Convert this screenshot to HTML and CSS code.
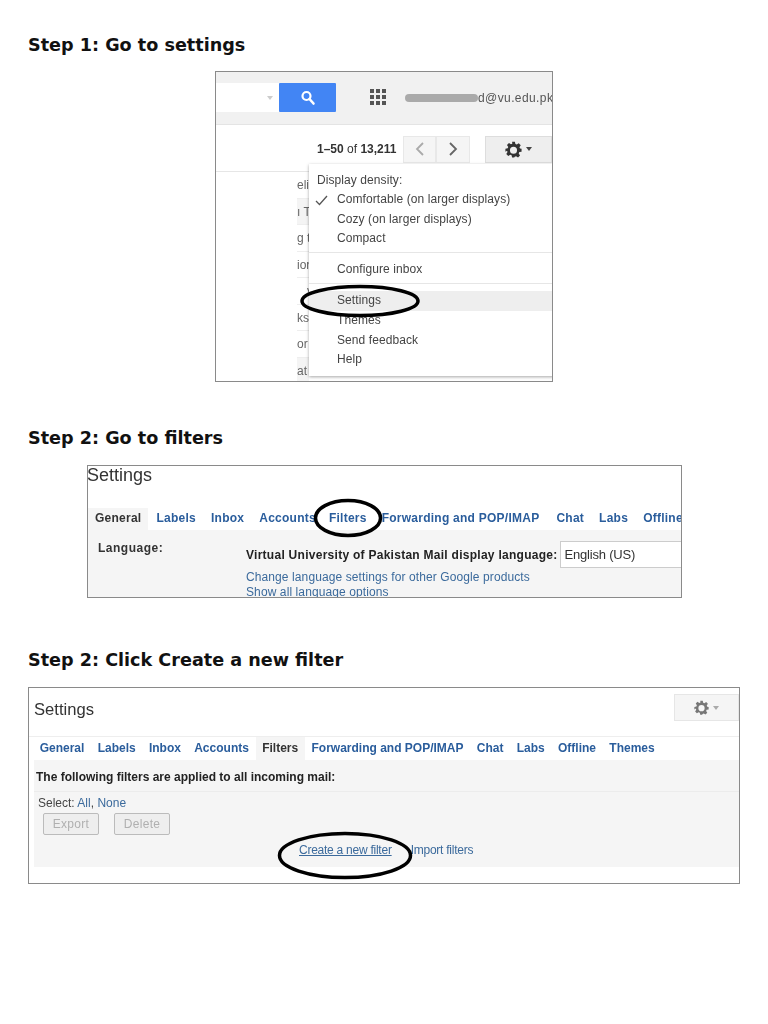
FILE: index.html
```html
<!DOCTYPE html>
<html lang="en">
<head>
    <meta charset="UTF-8">
    <meta name="viewport" content="width=device-width, initial-scale=1.0">
    <title>Create a new filter</title>
    <link rel="stylesheet" href="styles.css">
</head>
<body>
    <div class="page">
        <h2 class="step step-one">Step 1: Go to settings</h2>

        <!-- gmail inbox with gear menu -->
        <div class="shot shot-inbox">
            <div class="top-bar">
                <div class="search-input"><span class="search-caret"></span></div>
                <div class="search-btn">
                    <svg width="16" height="16" viewBox="0 0 16 16"><circle cx="6.5" cy="6" r="4" fill="none" stroke="#fff" stroke-width="2.2"/><path d="M9.5 9l4 4.5" stroke="#fff" stroke-width="2.6" stroke-linecap="round"/></svg>
                </div>
                <svg class="apps-icon" width="16" height="17" viewBox="0 0 16 17" fill="#555">
                    <rect x="0" y="0" width="4" height="4"/><rect x="6" y="0" width="4" height="4"/><rect x="12" y="0" width="4" height="4"/>
                    <rect x="0" y="6" width="4" height="4"/><rect x="6" y="6" width="4" height="4"/><rect x="12" y="6" width="4" height="4"/>
                    <rect x="0" y="12" width="4" height="4"/><rect x="6" y="12" width="4" height="4"/><rect x="12" y="12" width="4" height="4"/>
                </svg>
                <div class="account"><span class="account-smudge"></span><span class="account-text">d@vu.edu.pk</span></div>
            </div>
            <div class="tool-bar">
                <span class="page-count"><b>1–50</b> of <b>13,211</b></span>
                <div class="pager">
                    <span class="pager-btn"><svg width="10" height="14" viewBox="0 0 10 14"><path d="M8 1L2 7l6 6" fill="none" stroke="#aaa" stroke-width="1.8"/></svg></span>
                    <span class="pager-btn"><svg width="10" height="14" viewBox="0 0 10 14"><path d="M2 1l6 6-6 6" fill="none" stroke="#666" stroke-width="1.8"/></svg></span>
                </div>
                <div class="gear-btn">
                    <svg width="17" height="17" viewBox="0 0 24 24"><path fill="#333" fill-rule="evenodd" d="M10 1h4l.7 3.2 1.9.8 2.8-1.8 2.8 2.8-1.8 2.8.8 1.9L23.4 11v4l-3.2.7-.8 1.9 1.8 2.8-2.8 2.8-2.8-1.8-1.9.8L13 23.4h-3l-.7-3.2-1.9-.8-2.8 1.8-2.8-2.8 1.8-2.8-.8-1.9L.6 15v-4l3.2-.7.8-1.9L2.8 5.6l2.8-2.8 2.8 1.8 1.9-.8zM12 8a5 5 0 1 0 0 10 5 5 0 0 0 0-10z"/></svg>
                    <span class="caret"></span>
                </div>
            </div>
            <ul class="mail-rows">
                <li>eli</li>
                <li class="read">ı T</li>
                <li>g t</li>
                <li>ior</li>
                <li>&nbsp;&nbsp;&nbsp;v</li>
                <li>ks</li>
                <li>or</li>
                <li class="read">at</li>
            </ul>
            <div class="gear-menu">
                <div class="menu-head">Display density:</div>
                <div class="menu-item menu-checked">
                    <svg class="check" width="13" height="11" viewBox="0 0 13 11"><path d="M1 6l3.5 3.5L12 1" fill="none" stroke="#555" stroke-width="1.3"/></svg>
                    Comfortable (on larger displays)
                </div>
                <div class="menu-item">Cozy (on larger displays)</div>
                <div class="menu-item">Compact</div>
                <div class="menu-sep"></div>
                <div class="menu-item">Configure inbox</div>
                <div class="menu-sep"></div>
                <div class="menu-item menu-active">Settings</div>
                <div class="menu-item">Themes</div>
                <div class="menu-item">Send feedback</div>
                <div class="menu-item">Help</div>
            </div>
            <svg class="ring ring-settings" viewBox="0 0 120 34"><ellipse cx="60" cy="17" rx="58" ry="14.5" fill="none" stroke="#000" stroke-width="3.5"/></svg>
        </div>

        <h2 class="step step-two">Step 2: Go to filters</h2>

        <!-- settings, general tab -->
        <div class="shot shot-general">
            <div class="settings-title">Settings</div>
            <div class="tabs tabs-general">
                <span class="tab tab-current">General</span>
                <span class="tab">Labels</span>
                <span class="tab">Inbox</span>
                <span class="tab">Accounts</span>
                <span class="tab tab-pull">Filters</span>
                <span class="tab tab-wide">Forwarding and POP/IMAP</span>
                <span class="tab">Chat</span>
                <span class="tab">Labs</span>
                <span class="tab tab-last">Offline</span>
            </div>
            <div class="general-body">
                <div class="lang-label">Language:</div>
                <div class="lang-col">
                    <div class="lang-row">
                        <span class="lang-text">Virtual University of Pakistan Mail display language:</span>
                        <span class="lang-select">English (US)</span>
                    </div>
                    <a class="link lang-link">Change language settings for other Google products</a>
                    <a class="link lang-link">Show all language options</a>
                </div>
            </div>
            <svg class="ring ring-filters" viewBox="0 0 70 40"><ellipse cx="35" cy="20" rx="32.5" ry="17.5" fill="none" stroke="#000" stroke-width="3.5"/></svg>
        </div>

        <h2 class="step step-three">Step 2: Click Create a new filter</h2>

        <!-- settings, filters tab -->
        <div class="shot shot-filters">
            <div class="filters-head">
                <div class="settings-title">Settings</div>
                <div class="gear-small">
                    <svg width="15" height="15" viewBox="0 0 24 24"><path fill="#777" fill-rule="evenodd" d="M10 1h4l.7 3.2 1.9.8 2.8-1.8 2.8 2.8-1.8 2.8.8 1.9L23.4 11v4l-3.2.7-.8 1.9 1.8 2.8-2.8 2.8-2.8-1.8-1.9.8L13 23.4h-3l-.7-3.2-1.9-.8-2.8 1.8-2.8-2.8 1.8-2.8-.8-1.9L.6 15v-4l3.2-.7.8-1.9L2.8 5.6l2.8-2.8 2.8 1.8 1.9-.8zM12 8a5 5 0 1 0 0 10 5 5 0 0 0 0-10z"/></svg>
                    <span class="caret caret-light"></span>
                </div>
            </div>
            <div class="tabs tabs-filters">
                <span class="tab">General</span>
                <span class="tab">Labels</span>
                <span class="tab">Inbox</span>
                <span class="tab">Accounts</span>
                <span class="tab tab-current">Filters</span>
                <span class="tab">Forwarding and POP/IMAP</span>
                <span class="tab">Chat</span>
                <span class="tab">Labs</span>
                <span class="tab">Offline</span>
                <span class="tab">Themes</span>
            </div>
            <div class="filters-body">
                <div class="filters-note">The following filters are applied to all incoming mail:</div>
                <div class="filters-select">Select: <a class="link">All</a>, <a class="link">None</a></div>
                <div class="filters-btns">
                    <span class="btn">Export</span>
                    <span class="btn">Delete</span>
                </div>
                <div class="filters-links">
                    <a class="link create-link">Create a new filter</a>
                    <a class="link">Import filters</a>
                </div>
            </div>
            <svg class="ring ring-create" viewBox="0 0 136 49"><ellipse cx="68" cy="24.5" rx="65.5" ry="22" fill="none" stroke="#000" stroke-width="3.5"/></svg>
        </div>
    </div>
</body>
</html>
```

FILE: styles.css
```css
* {
    box-sizing: border-box;
}

body {
    margin: 0;
    background: #fff;
    font-family: "Liberation Sans", Arial, sans-serif;
    color: #222;
}

.page {
    padding-top: 34px;
}

.step {
    margin: 0 0 15px 28px;
    font-family: "DejaVu Sans", sans-serif;
    font-size: 17.6px;
    line-height: 22px;
    font-weight: bold;
    color: #111;
}

.step-two {
    margin-top: 45px;
    margin-bottom: 16px;
}

.step-three {
    margin-top: 51px;
    margin-bottom: 16px;
}

.shot {
    position: relative;
    overflow: hidden;
    border: 1px solid #8a8a8a;
    background: #fff;
    filter: blur(0.35px);
}

.link {
    color: #3b6a9c;
}

.ring {
    position: absolute;
}

/* step 1 */
.shot-inbox {
    width: 338px;
    height: 311px;
    margin-left: 215px;
}

.top-bar {
    display: flex;
    align-items: center;
    height: 53px;
    padding-bottom: 1px;
    background: #f1f1f1;
    border-bottom: 1px solid #e4e4e4;
}

.top-bar > * {
    flex: none;
}

.search-input {
    display: flex;
    align-items: center;
    justify-content: flex-end;
    width: 63px;
    height: 29px;
    padding-right: 6px;
    background: #fff;
}

.search-caret {
    border-top: 4px solid #ccc;
    border-left: 3px solid transparent;
    border-right: 3px solid transparent;
}

.search-btn {
    display: flex;
    align-items: center;
    justify-content: center;
    width: 57px;
    height: 29px;
    background: #4285f4;
    border-radius: 1px;
}

.apps-icon {
    margin-left: 34px;
}

.account {
    display: flex;
    align-items: center;
    margin-left: 19px;
    white-space: nowrap;
    font-size: 12px;
    letter-spacing: 0.4px;
    color: #555;
}

.account-smudge {
    width: 73px;
    height: 8px;
    background: #aaa;
    border-radius: 4px;
}

.tool-bar {
    display: flex;
    align-items: center;
    height: 47px;
    padding: 2px 0 0 101px;
    border-bottom: 1px solid #e6e6e6;
}

.page-count {
    width: 87px;
    font-size: 12px;
    color: #333;
    white-space: nowrap;
}

.pager {
    display: flex;
    height: 27px;
}

.pager-btn {
    display: flex;
    align-items: center;
    justify-content: center;
    width: 33.5px;
    background: #f5f5f5;
    border: 1px solid #e8e8e8;
}

.gear-btn {
    display: flex;
    align-items: center;
    justify-content: center;
    gap: 4px;
    width: 68px;
    height: 27px;
    margin-left: 15px;
    background: #eee;
    border: 1px solid #ddd;
}

.caret {
    border-top: 4px solid #444;
    border-left: 3px solid transparent;
    border-right: 3px solid transparent;
}

.caret-light {
    border-top-color: #aaa;
}

/* row text runs on under the menu, only the first letters show */
.mail-rows {
    width: 12px;
    margin: 0 0 0 81px;
    padding: 0;
    list-style: none;
}

.mail-rows li {
    height: 26.5px;
    padding-top: 6px;
    white-space: nowrap;
    font-size: 12px;
    color: #666;
    border-bottom: 1px solid #eee;
}

.mail-rows .read {
    background: #f4f4f4;
}

.gear-menu {
    position: absolute;
    left: 93px;
    top: 92px;
    width: 245px;
    height: 212px;
    padding-top: 6px;
    background: #fff;
    box-shadow: 0 1px 3px rgba(0, 0, 0, 0.35);
    font-size: 12px;
    letter-spacing: 0.08px;
    color: #444;
}

.menu-head {
    height: 20px;
    line-height: 20px;
    padding-left: 8px;
}

.menu-item {
    position: relative;
    height: 19.6px;
    line-height: 19.6px;
    padding-left: 28px;
}

.check {
    position: absolute;
    left: 6px;
    top: 5px;
}

.menu-sep {
    height: 11.5px;
    background: linear-gradient(#e6e6e6, #e6e6e6) no-repeat 0 3px / 100% 1px;
}

.menu-active {
    background: #eee;
}

.ring-settings {
    left: 84px;
    top: 212px;
    width: 120px;
    height: 34px;
}

/* step 2 */
.shot-general {
    width: 595px;
    height: 133px;
    margin-left: 87px;
}

.settings-title {
    height: 32px;
    font-size: 18px;
    line-height: 18px;
    color: #333;
}

.shot-general .settings-title {
    margin-left: -1px;
}

.tabs {
    display: flex;
    white-space: nowrap;
    font-size: 12px;
    font-weight: bold;
    color: #2a5d9c;
}

.tabs-general {
    gap: 1px;
    height: 32px;
    padding: 10px 0 0;
    letter-spacing: 0.25px;
    background: #fff;
}

.tab {
    padding: 3px 7px 0;
}

.tab-current {
    background: #f5f5f5;
    color: #333;
}

.tab-pull {
    margin-left: -2px;
}

.tab-wide {
    margin-right: 2px;
}

.tab-last {
    padding-right: 0;
}

.general-body {
    display: flex;
    height: 69px;
    padding: 11px 0 0 10px;
    background: #f5f5f5;
}

.lang-label {
    flex: none;
    width: 148px;
    font-size: 12px;
    font-weight: bold;
    letter-spacing: 0.5px;
    color: #333;
}

.lang-row {
    display: flex;
    align-items: center;
    white-space: nowrap;
}

.lang-text {
    font-size: 12px;
    font-weight: bold;
    letter-spacing: 0.27px;
    color: #222;
}

.lang-select {
    flex: none;
    width: 130px;
    height: 27px;
    margin-left: 2px;
    padding-left: 4px;
    line-height: 25px;
    font-size: 13px;
    letter-spacing: -0.2px;
    color: #333;
    background: #fff;
    border: 1px solid #ccc;
}

.lang-link {
    display: block;
    height: 15px;
    font-size: 12px;
    line-height: 15px;
    letter-spacing: 0.1px;
    white-space: nowrap;
}

.lang-row + .lang-link {
    margin-top: 2px;
}

.ring-filters {
    left: 225px;
    top: 32px;
    width: 70px;
    height: 40px;
}

/* step 3 */
.shot-filters {
    width: 712px;
    height: 197px;
    margin-left: 28px;
}

.filters-head {
    display: flex;
    justify-content: space-between;
    height: 49px;
    padding: 6px 0 0 5px;
    border-bottom: 1px solid #eee;
}

.filters-head .settings-title {
    margin-top: 7px;
    font-size: 16.6px;
}

.gear-small {
    display: flex;
    align-items: center;
    justify-content: center;
    gap: 4px;
    width: 65px;
    height: 27px;
    background: #f5f5f5;
    border: 1px solid #e6e6e6;
}

.tabs-filters {
    height: 23px;
    padding-left: 4px;
}

.tabs-filters .tab {
    padding: 4px 6.65px 0;
}

.filters-body {
    height: 107px;
    margin-left: 5px;
    background: #f5f5f5;
}

.filters-note {
    height: 32px;
    padding: 10px 0 0 2px;
    font-size: 12px;
    font-weight: bold;
    color: #222;
    border-bottom: 1px solid #ececec;
}

.filters-select {
    padding: 4px 0 0 4px;
    font-size: 12px;
    line-height: 14px;
    color: #444;
}

.filters-btns {
    display: flex;
    gap: 15px;
    margin: 3px 0 0 9px;
}

.btn {
    width: 56px;
    height: 22px;
    line-height: 20px;
    text-align: center;
    font-size: 12px;
    letter-spacing: 0.3px;
    color: #b0b0b0;
    background: #eee;
    border: 1px solid #bbb;
    border-radius: 2px;
}

.filters-links {
    display: flex;
    gap: 19px;
    margin: 8px 0 0 265px;
    font-size: 12px;
    letter-spacing: -0.25px;
}

.create-link {
    text-decoration: underline;
}

.ring-create {
    left: 248px;
    top: 143px;
    width: 136px;
    height: 49px;
}
```
